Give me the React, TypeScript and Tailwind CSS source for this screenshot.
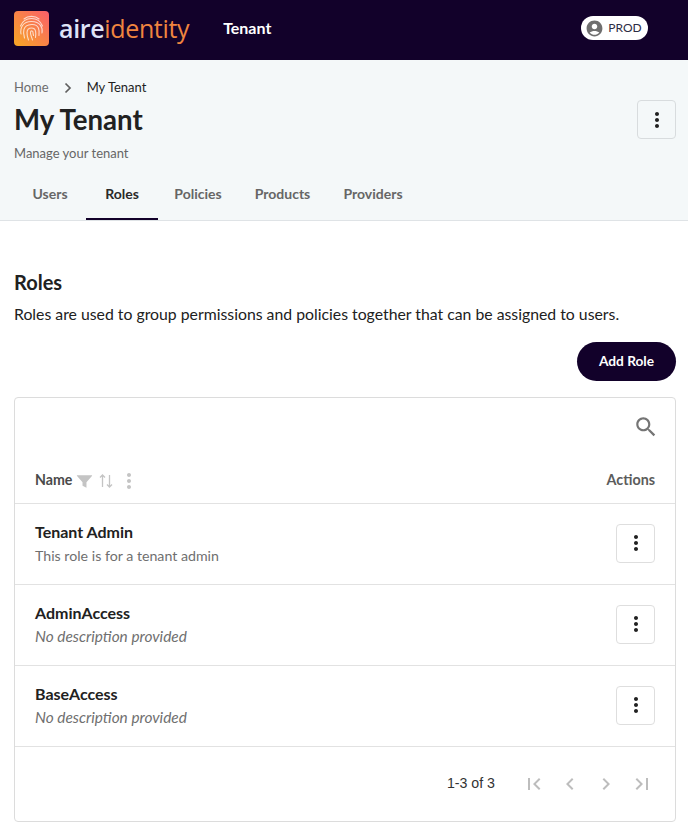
const font = "font-['Lato','Liberation_Sans',sans-serif]";

function Dots(props: { className?: string }) {
    return (
        <svg viewBox="0 0 24 24" width="24" height="24" fill="currentColor" className={props.className}>
            <path d="M12 8c1.100 0 2-.9 2-2s-.9-2-2-2-2 .9-2 2 .9 2 2 2zm0 2c-1.100 0-2 .9-2 2s.9 2 2 2 2-.9 2-2-.9-2-2-2zm0 6c-1.100 0-2 .9-2 2s.9 2 2 2 2-.9 2-2-.9-2-2-2z" />
        </svg>
    );
}

function Logo() {
    return (
        <div className="flex items-center gap-[10px]">
            <svg viewBox="0 0 35 35" width="35" height="35">
                <defs>
                    <linearGradient id="logo-grad" x1="0" y1="1" x2="1" y2="0">
                        <stop offset="0" stopColor="#f6a723" />
                        <stop offset="1" stopColor="#fb5f6b" />
                    </linearGradient>
                </defs>
                <rect width="35" height="35" rx="4" fill="url(#logo-grad)" />
                <g fill="none" stroke="#fff" strokeOpacity="0.7" strokeWidth="1.100" strokeLinecap="round">
                    <path d="M10 8c4-3.500 11-3.500 15 0" />
                    <path d="M6.500 15c2-5 6.500-7.500 11-7.500s9 2.500 11 7.500" />
                    <path d="M7 23c-1-6 1.500-12.500 10.500-12.500S29 17 28 22" />
                    <path d="M10.500 27c-1.500-5-2.500-13 7-13.500 8-.5 8 6 7.500 11" />
                    <path d="M14.500 29c-1.500-4-3.500-12 3-12 5 0 4.500 5 4 9.500" />
                    <path d="M18.500 29c-.5-2.500-2.500-5-2-8 .3-1.500 2.500-1.500 2.500.5 0 1.500.5 2 .5 3" />
                </g>
            </svg>
            <div className="flex items-baseline text-[25px] leading-[32px] tracking-[-0.35px] font-['Open_Sans','Liberation_Sans',sans-serif]">
                <span className="font-semibold text-[#dfe3f7]">aire</span>
                <span className="font-normal text-[#f0853f]">identity</span>
            </div>
        </div>
    );
}

function Header() {
    return (
        <div className="flex h-[60px] items-center bg-[#12012a] pb-[4px] pl-[14px]">
            <Logo />
            <div className="ml-[34px] text-[16px] font-bold text-white">Tenant</div>
            <div className="ml-[310px] flex h-[24px] w-[67px] items-center gap-[4px] rounded-full bg-white pl-[4px] text-[12px] font-normal text-[#2c2c44]">
                <svg viewBox="0 0 24 24" width="19" height="19" fill="#6f6f6f">
                    <path d="M12 2C6.480 2 2 6.480 2 12s4.480 10 10 10 10-4.480 10-10S17.520 2 12 2zm0 4c1.930 0 3.500 1.570 3.500 3.500S13.930 13 12 13s-3.500-1.570-3.500-3.500S10.070 6 12 6zm0 14c-2.030 0-4.430-.820-6.140-2.880C7.550 15.800 9.680 15 12 15s4.450.800 6.140 2.120C16.430 19.180 14.030 20 12 20z" />
                </svg>
                PROD
            </div>
        </div>
    );
}

function PageHead() {
    const tabs = [
        { label: "Users", width: "w-[72px]" },
        { label: "Roles", width: "w-[72px]", active: true },
        { label: "Policies", width: "w-[80px]" },
        { label: "Products", width: "w-[89px]" },
        { label: "Providers", width: "w-[92px]" },
    ];

    return (
        <div className="border-b border-[#dfe3e6] bg-[#f4f8f9]">
            <div className="flex items-start justify-between px-[12px] pl-[14px] pt-[20px]">
                <div>
                    <div className="flex h-[17px] -translate-y-[1px] items-center text-[13px] leading-[17px]">
                        <span className="text-[#6d6d6d]">Home</span>
                        <svg viewBox="0 0 10 12" width="10" height="12" fill="none" stroke="#5f5f5f" strokeWidth="1.700" className="mx-[14px]">
                            <path d="M2.500 1.500 7 6l-4.500 4.500" />
                        </svg>
                        <span className="text-[#1e1e1e]">My Tenant</span>
                    </div>
                    <h1 className="mt-[5px] text-[27.600px] leading-[36px] font-bold text-[#212121]">My Tenant</h1>
                    <div className="mt-[6px] text-[13px] leading-[18px] text-[#666]">Manage your tenant</div>
                </div>
                <button className="mt-[20px] flex h-[39px] w-[39px] items-center justify-center rounded-[4px] border border-[#d8dcde] text-[#212121]">
                    <Dots />
                </button>
            </div>
            <div className="mt-[5px] flex pl-[14px]">
                {tabs.map((tab) => (
                    <div
                        key={tab.label}
                        className={
                            "flex h-[53px] items-center justify-center border-b-2 pt-[1px] text-[14px] font-bold " +
                            tab.width +
                            (tab.active ? " border-[#12012a] text-[#2a2a2a]" : " border-transparent text-[#666]")
                        }
                    >
                        {tab.label}
                    </div>
                ))}
            </div>
        </div>
    );
}

function RoleRow(props: { name: string; description: string; missing?: boolean }) {
    return (
        <div className="flex h-[81px] items-center justify-between border-b border-[#e2e2e2] pb-[2px] pl-[20px] pr-[20px]">
            <div>
                <div className="text-[16px] leading-[20px] font-bold text-[#212121]">{props.name}</div>
                <div className={"leading-[18px] text-[#6f6f6f]" + (props.missing ? " mt-[4px] text-[15.400px] italic" : " mt-[5px] text-[14.200px]")}>
                    {props.description}
                </div>
            </div>
            <button className="flex h-[39px] w-[39px] items-center justify-center rounded-[4px] border border-[#dedede] text-[#212121]">
                <Dots />
            </button>
        </div>
    );
}

function PagerIcon(props: { d: string }) {
    return (
        <svg viewBox="0 0 24 24" width="24" height="24" fill="#bdbdbd">
            <path d={props.d} />
        </svg>
    );
}

function RolesTable() {
    return (
        <div className="mt-[16px] rounded-[4px] border border-[#dcdcdc]">
            <div className="flex h-[56px] items-center justify-end pr-[16px] pt-[2px]">
                <svg viewBox="0 0 24 24" width="26" height="26" fill="#757575">
                    <path d="M15.500 14h-.79l-.28-.27C15.410 12.590 16 11.110 16 9.500 16 5.910 13.090 3 9.500 3S3 5.910 3 9.500 5.910 16 9.500 16c1.610 0 3.090-.59 4.230-1.570l.27.28v.79l5 4.990L20.490 19l-4.990-5zm-6 0C7.010 14 5 11.990 5 9.500S7.010 5 9.500 5 14 7.010 14 9.500 11.990 14 9.500 14z" />
                </svg>
            </div>
            <div className="flex h-[50px] items-center justify-between border-b border-[#e2e2e2] pb-[1px] pl-[20px] pr-[20px] pt-[3px]">
                <div className="flex items-center text-[14.200px] font-bold text-[#4a4a4a]">
                    Name
                    <svg viewBox="0 0 24 24" width="19" height="19" fill="#c4c4c4" className="ml-[3px] mt-[3px]">
                        <path d="M3 4c2.500 0 15.500 0 18 0 .6 0 .8.700.4 1.200L14.500 13v7l-5-2.500V13L2.600 5.200C2.200 4.700 2.400 4 3 4z" />
                    </svg>
                    <svg viewBox="0 0 18 18" width="18" height="18" fill="none" stroke="#c4c4c4" strokeWidth="1.300" className="ml-[3px] mt-[2px]">
                        <path d="M5.500 15V3M3 5.500 5.500 3 8 5.500M12.500 3v12M10 12.500l2.500 2.500 2.500-2.500" />
                    </svg>
                    <Dots className="ml-[2px] mt-[2px] text-[#c4c4c4]" />
                </div>
                <div className="text-[14.300px] font-bold text-[#5c5c5c]">Actions</div>
            </div>
            <RoleRow name="Tenant Admin" description="This role is for a tenant admin" />
            <RoleRow name="AdminAccess" description="No description provided" missing />
            <RoleRow name="BaseAccess" description="No description provided" missing />
            <div className="flex h-[74px] items-center justify-end pr-[21px]">
                <span className="mr-[27px] font-['Liberation_Sans',sans-serif] text-[14.200px] text-[#333]">1-3 of 3</span>
                <div className="flex gap-[12px]">
                    <PagerIcon d="M18.410 16.590 13.820 12l4.590-4.590L17 6l-6 6 6 6 1.410-1.410zM6 6h2v12H6V6z" />
                    <PagerIcon d="M15.410 7.410 14 6l-6 6 6 6 1.410-1.410L10.830 12z" />
                    <PagerIcon d="M10 6 8.590 7.410 13.170 12l-4.580 4.590L10 18l6-6z" />
                    <PagerIcon d="M5.590 7.410 10.180 12l-4.590 4.590L7 18l6-6-6-6-1.410 1.410zM16 6h2v12h-2V6z" />
                </div>
            </div>
        </div>
    );
}

export default function App() {
    return (
        <div className={"min-h-[838px] bg-white " + font}>
            <Header />
            <PageHead />
            <div className="px-[12px] pl-[14px] pt-[48px]">
                <h2 className="text-[20px] leading-[26px] font-bold text-[#212121]">Roles</h2>
                <p className="mt-[8px] text-[15.800px] leading-[22px] text-[#212121]">
                    Roles are used to group permissions and policies together that can be assigned to users.
                </p>
                <div className="mt-[17px] flex justify-end">
                    <button className="h-[39px] w-[99px] rounded-full bg-[#12012a] text-[13.700px] font-bold text-white">
                        Add Role
                    </button>
                </div>
                <RolesTable />
            </div>
        </div>
    );
}
